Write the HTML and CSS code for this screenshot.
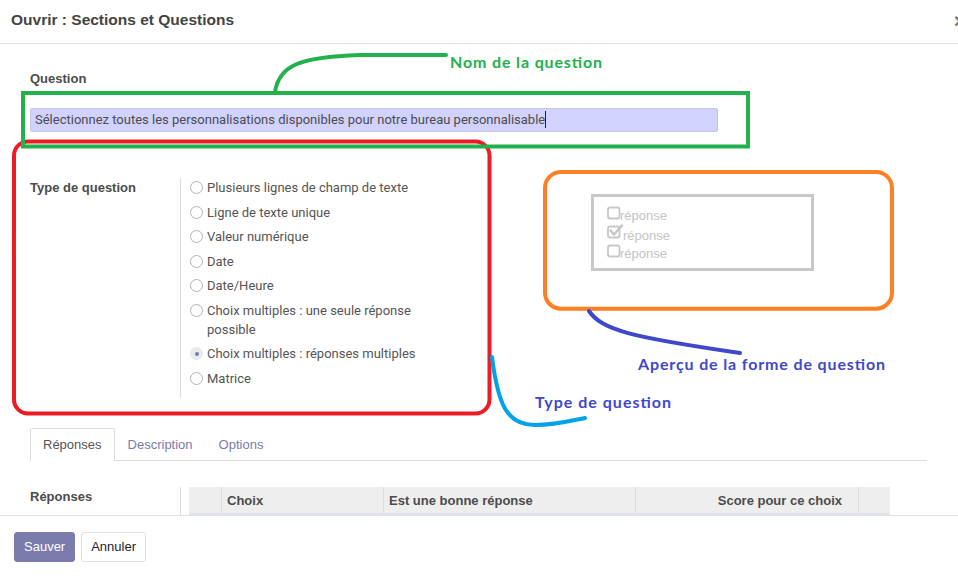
FILE: index.html
```html
<!DOCTYPE html>
<html lang="fr">
<head>
<meta charset="utf-8">
<title>Ouvrir : Sections et Questions</title>
<link rel="stylesheet" href="styles.css">
</head>
<body>
<div class="dialog">
  <header class="modal-header">
    <h4 class="modal-title">Ouvrir : Sections et Questions</h4>
    <button class="close">×</button>
  </header>
  <main class="modal-body">
    <div class="sheet">
      <label class="title-label">Question</label>
      <div class="title-input">Sélectionnez toutes les personnalisations disponibles pour notre bureau personnalisable<span class="caret"></span></div>

      <div class="type-row">
        <div class="type-group">
          <div class="field-label">Type de question</div>
          <ul class="radio-list">
            <li class="radio"><span class="radio-dot"></span><span class="radio-text">Plusieurs lignes de champ de texte</span></li>
            <li class="radio"><span class="radio-dot"></span><span class="radio-text">Ligne de texte unique</span></li>
            <li class="radio"><span class="radio-dot"></span><span class="radio-text">Valeur numérique</span></li>
            <li class="radio"><span class="radio-dot"></span><span class="radio-text">Date</span></li>
            <li class="radio"><span class="radio-dot"></span><span class="radio-text">Date/Heure</span></li>
            <li class="radio"><span class="radio-dot"></span><span class="radio-text">Choix multiples : une seule réponse possible</span></li>
            <li class="radio checked"><span class="radio-dot"></span><span class="radio-text">Choix multiples : réponses multiples</span></li>
            <li class="radio"><span class="radio-dot"></span><span class="radio-text">Matrice</span></li>
          </ul>
        </div>
        <div class="preview">
          <svg width="223" height="77" viewBox="0 0 223 77">
            <rect x="1.5" y="1.5" width="220" height="74" fill="#fff" stroke="#c8c8c8" stroke-width="3"/>
            <rect x="17" y="13.5" width="11.5" height="11" rx="2" fill="none" stroke="#c8c8c8" stroke-width="1.8"/>
            <text x="29" y="26" class="pv-text">réponse</text>
            <rect x="17" y="32.5" width="11.5" height="11" rx="2" fill="none" stroke="#c8c8c8" stroke-width="1.8"/>
            <path d="M19.5 36.5 L23 40.5 L31 31.5" fill="none" stroke="#c8c8c8" stroke-width="2.6" stroke-linecap="round" stroke-linejoin="round"/>
            <text x="32" y="46" class="pv-text">réponse</text>
            <rect x="17" y="51.5" width="11.5" height="11" rx="2" fill="none" stroke="#c8c8c8" stroke-width="1.8"/>
            <text x="29" y="64" class="pv-text">réponse</text>
          </svg>
        </div>
      </div>

      <nav class="tabs">
        <span class="tab active">Réponses</span>
        <span class="tab">Description</span>
        <span class="tab">Options</span>
      </nav>

      <div class="answers-row">
        <div class="field-label answers-label">Réponses</div>
        <div class="answers-field">
          <div class="grid-head">
            <div class="cell"></div>
            <div class="cell">Choix</div>
            <div class="cell">Est une bonne réponse</div>
            <div class="cell cell-right">Score pour ce choix</div>
            <div class="cell cell-last"></div>
          </div>
          <div class="grid-body"></div>
        </div>
      </div>
    </div>
  </main>
  <footer class="modal-footer">
    <button class="btn btn-primary">Sauver</button>
    <button class="btn btn-secondary">Annuler</button>
  </footer>

  <svg class="annotations" width="958" height="576" viewBox="0 0 958 576">
    <rect x="14" y="141.5" width="475.5" height="272" rx="14" fill="none" stroke="#ed1c24" stroke-width="4"/>
    <rect x="23" y="93" width="725" height="53.5" fill="none" stroke="#22b14c" stroke-width="4"/>
    <path d="M275 92 C279 66 298 57 360 55 L446 55" fill="none" stroke="#22b14c" stroke-width="4" stroke-linecap="round"/>
    <text x="450" y="68" class="ann ann-green" textLength="152" lengthAdjust="spacing">Nom de la question</text>
    <rect x="545" y="172" width="347" height="136.7" rx="16" fill="none" stroke="#ff7f27" stroke-width="4"/>
    <path d="M589 311 C602 330 630 337 740 353" fill="none" stroke="#3f48cc" stroke-width="4" stroke-linecap="round"/>
    <text x="638" y="370" class="ann ann-indigo" textLength="247" lengthAdjust="spacing">Aperçu de la forme de question</text>
    <path d="M492 357 C498 405 507 425 535 425 C555 425 570 421 585 418" fill="none" stroke="#00a2e8" stroke-width="4" stroke-linecap="round"/>
    <text x="535" y="408" class="ann ann-indigo" textLength="136" lengthAdjust="spacing">Type de question</text>
  </svg>
</div>
</body>
</html>
```

FILE: styles.css
```css
* { box-sizing: border-box; }

body {
  margin: 0;
  font-family: Roboto, "Liberation Sans", Arial, sans-serif;
  font-size: 13px;
  color: #4c4c4c;
  background: #fff;
}

.dialog {
  position: relative;
  width: 958px;
  height: 576px;
  overflow: hidden;
  display: flex;
  flex-direction: column;
  background: #fff;
}

/* Header */
.modal-header {
  height: 44px;
  flex-shrink: 0;
  border-bottom: 1px solid #dee2e6;
  display: flex;
  align-items: center;
  justify-content: space-between;
  padding: 0 0 3px 11px;
}

.modal-title {
  margin: 0;
  font-family: "Liberation Sans", Arial, sans-serif;
  font-size: 15.5px;
  font-weight: 700;
  line-height: 20px;
  color: #444;
}

.close {
  border: 0;
  background: none;
  padding: 0;
  margin-right: -8px;
  font-family: "Liberation Sans", Arial, sans-serif;
  font-size: 21px;
  font-weight: 700;
  line-height: 1;
  color: #777;
}

/* Body */
.modal-body {
  flex: 1;
  overflow: hidden;
}

.sheet {
  padding: 25px 31px 0 30px;
}

.title-label {
  display: block;
  font-family: "Liberation Sans", Arial, sans-serif;
  font-weight: 700;
  line-height: 19px;
  color: #4c4c4c;
}

.title-input {
  margin-top: 20px;
  width: 688px;
  height: 24px;
  background: #d2d2ff;
  border: 1px solid #c6c6e2;
  border-radius: 2px;
  padding: 0 4px;
  line-height: 22px;
  white-space: nowrap;
  color: #4c4c4c;
}

.caret {
  display: inline-block;
  width: 1px;
  height: 17px;
  background: #222;
  vertical-align: -4px;
}

.type-row {
  display: flex;
  margin-top: 46px;
}

.type-group {
  display: flex;
  width: 450px;
}

.field-label {
  width: 150px;
  flex-shrink: 0;
  font-family: "Liberation Sans", Arial, sans-serif;
  font-weight: 700;
  line-height: 19px;
  color: #4c4c4c;
}

.radio-list {
  list-style: none;
  margin: 0;
  padding: 0 0 10.5px 9px;
  border-left: 1px solid #ddd;
}

.radio {
  display: flex;
  gap: 4px;
  line-height: 19px;
  margin-bottom: 5.5px;
}

.radio:last-child { margin-bottom: 0; }

.radio-dot {
  flex-shrink: 0;
  width: 13px;
  height: 13px;
  margin-top: 3px;
  border: 1px solid #adb5bd;
  border-radius: 50%;
  display: flex;
  align-items: center;
  justify-content: center;
  background: #fff;
}

.radio.checked .radio-dot {
  background: #e9ecef;
  border-color: #e4e6ea;
}

.radio.checked .radio-dot::after {
  content: "";
  width: 4px;
  height: 4px;
  border-radius: 50%;
  background: #7c7bad;
}

.radio-text {
  max-width: 235px;
  color: #555;
}

.preview {
  margin-left: 111px;
  margin-top: 16px;
  height: 77px;
}

.preview svg { display: block; }

.pv-text {
  font-family: "Liberation Sans", Arial, sans-serif;
  font-size: 13px;
  fill: #c4c4c4;
}

/* Tabs */
.tabs {
  display: flex;
  margin-top: 30px;
  border-bottom: 1px solid #ddd;
}

.tab {
  padding: 7px 12px;
  font-family: "Liberation Sans", Arial, sans-serif;
  line-height: 18px;
  border: 1px solid transparent;
  border-bottom: 0;
  margin-bottom: -1px;
  border-radius: 2px 2px 0 0;
  color: #7c7bad;
}

.tab.active {
  border-color: #ddd;
  background: #fff;
  color: #555;
}

/* Answers */
.answers-row {
  display: flex;
  margin-top: 26px;
}

.answers-label { line-height: 19px; }

.answers-field {
  border-left: 1px solid #ddd;
  padding-left: 8px;
  min-height: 60px;
}

.grid-head {
  display: grid;
  grid-template-columns: 33px 162px 252px 223px 31px;
  background: #eee;
  border-bottom: 2px solid #dfe3e8;
}

.cell {
  height: 26px;
  line-height: 27px;
  padding: 0 5px;
  border-right: 1px solid #ddd;
  font-family: "Liberation Sans", Arial, sans-serif;
  font-weight: 700;
  color: #4c4c4c;
  white-space: nowrap;
}

.cell-right {
  text-align: right;
  padding-right: 16px;
}

.cell-last { border-right: 0; }

/* Footer */
.modal-footer {
  height: 61px;
  flex-shrink: 0;
  border-top: 1px solid #dee2e6;
  padding: 16px 14px 0;
  display: flex;
  align-items: flex-start;
  gap: 6px;
}

.btn {
  height: 30px;
  padding: 0 9px;
  font-family: "Liberation Sans", Arial, sans-serif;
  font-size: 13px;
  line-height: 28px;
  border-radius: 3px;
  border: 1px solid;
}

.btn-primary {
  background: #7c7bad;
  border-color: #7c7bad;
  color: #fff;
}

.btn-secondary {
  background: #fff;
  border-color: #dee2e6;
  color: #212529;
}

/* Annotation overlay */
.annotations {
  position: absolute;
  left: 0;
  top: 0;
  pointer-events: none;
}

.ann {
  font-family: Lato, "Open Sans", sans-serif;
  font-weight: 700;
  font-size: 16px;
}

.ann-green { fill: #22b14c; }
.ann-indigo { fill: #3f48cc; }
```
